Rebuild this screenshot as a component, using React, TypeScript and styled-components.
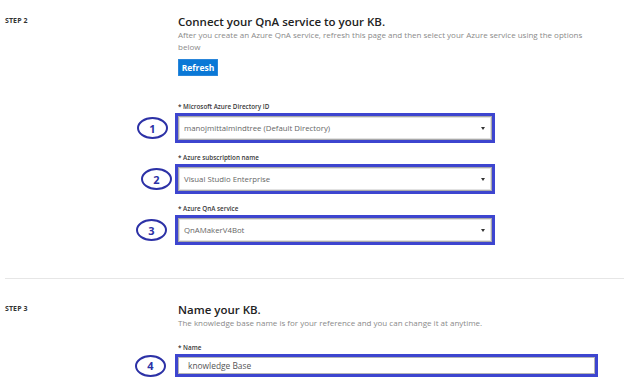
import React from "react";
import styled, { createGlobalStyle } from "styled-components";

const GlobalStyle = createGlobalStyle`
  html, body {
    margin: 0;
    padding: 0;
    background: #fff;
  }
  body {
    font-family: "Open Sans", "Noto Sans", Arial, sans-serif;
    color: #222;
    width: 624px;
    height: 388px;
    overflow: hidden;
  }
`;

const Page = styled.div`
  width: 624px;
`;

const Section = styled.section<{ $top: number; $bottom: number }>`
  display: grid;
  grid-template-columns: 173px 1fr;
  padding: ${(p) => p.$top}px 0 ${(p) => p.$bottom}px 5px;
`;

const StepLabel = styled.div`
  font-size: 7px;
  font-weight: 700;
  line-height: 10px;
  color: #333;
  letter-spacing: 0.1px;
  margin-top: 1px;
`;

const Content = styled.div`
  display: flex;
  flex-direction: column;
  align-items: flex-start;
`;

const Heading = styled.h2`
  margin: 0;
  font-size: 11.5px;
  font-weight: 600;
  line-height: 14px;
  color: #222;
`;

const Hint = styled.p`
  margin: 0;
  width: 420px;
  font-size: 8px;
  line-height: 12px;
  color: #8a8a8a;
`;

const RefreshButton = styled.button`
  margin-top: 6px;
  width: 40px;
  height: 17px;
  padding: 0;
  border: none;
  border-radius: 1px;
  background: #0a78d6;
  color: #fff;
  font-family: inherit;
  font-size: 8.5px;
  font-weight: 700;
  box-shadow: inset 0 0 0 1px #2a86da;
`;

const FieldList = styled.div<{ $top: number }>`
  display: flex;
  flex-direction: column;
  gap: 13px;
  margin-top: ${(p) => p.$top}px;
`;

const Field = styled.div`
  display: flex;
  flex-direction: column;
`;

const FieldLabel = styled.label`
  font-size: 6.3px;
  font-weight: 600;
  line-height: 10px;
  color: #3a3a3a;
  margin-bottom: 4px;
`;

const Control = styled.div`
  position: relative;
`;

const SelectBox = styled.div`
  box-sizing: border-box;
  width: 314px;
  height: 24px;
  display: flex;
  align-items: center;
  justify-content: space-between;
  padding: 0 6px 0 5px;
  border: 1px solid #a9a9a9;
  box-shadow: inset 0 0 0 1px #e2e2e2;
  outline: 3px solid #3d45cf;
  background: #fff;
  font-size: 7.8px;
  color: #666;
`;

const Caret = styled.span`
  width: 0;
  height: 0;
  border-left: 2px solid transparent;
  border-right: 2px solid transparent;
  border-top: 3px solid #333;
`;

const NameInput = styled.div`
  box-sizing: border-box;
  width: 417px;
  height: 17px;
  display: flex;
  align-items: center;
  padding-left: 9px;
  border: 1px solid #b5b5b5;
  outline: 3px solid #3d45cf;
  background: #fff;
  font-size: 8.4px;
  color: #555;
`;

const Marker = styled.div<{ $gap: number }>`
  position: absolute;
  top: 50%;
  right: calc(100% + ${(p) => p.$gap}px);
  transform: translateY(-50%);
  box-sizing: border-box;
  width: 31px;
  height: 22px;
  border: 2.5px solid #2c31a6;
  border-radius: 50%;
  display: flex;
  align-items: center;
  justify-content: center;
  font-size: 11px;
  font-weight: 700;
  color: #2c31a6;
  line-height: 1;
`;

const Divider = styled.hr`
  margin: 0 0 0 5px;
  border: none;
  border-top: 1px solid #e6e6e6;
`;

const services = [
  { label: "* Microsoft Azure Directory ID", value: "manojmittalmindtree (Default Directory)", gap: 10 },
  { label: "* Azure subscription name", value: "Visual Studio Enterprise", gap: 6 },
  { label: "* Azure QnA service", value: "QnAMakerV4Bot", gap: 11 },
];

export default function App() {
  return (
    <Page>
      <GlobalStyle />
      <Section $top={15} $bottom={36}>
        <StepLabel>STEP 2</StepLabel>
        <Content>
          <Heading>Connect your QnA service to your KB.</Heading>
          <Hint>
            After you create an Azure QnA service, refresh this page and then select your Azure service using the options below
          </Hint>
          <RefreshButton>Refresh</RefreshButton>
          <FieldList $top={26}>
            {services.map((s, i) => (
              <Field key={s.label}>
                <FieldLabel>{s.label}</FieldLabel>
                <Control>
                  <Marker $gap={s.gap}>{i + 1}</Marker>
                  <SelectBox>
                    <span>{s.value}</span>
                    <Caret />
                  </SelectBox>
                </Control>
              </Field>
            ))}
          </FieldList>
        </Content>
      </Section>
      <Divider />
      <Section $top={24} $bottom={0}>
        <StepLabel>STEP 3</StepLabel>
        <Content>
          <Heading>Name your KB.</Heading>
          <Hint>The knowledge base name is for your reference and you can change it at anytime.</Hint>
          <FieldList $top={14}>
            <Field>
              <FieldLabel>* Name</FieldLabel>
              <Control>
                <Marker $gap={12}>4</Marker>
                <NameInput>knowledge Base</NameInput>
              </Control>
            </Field>
          </FieldList>
        </Content>
      </Section>
    </Page>
  );
}
